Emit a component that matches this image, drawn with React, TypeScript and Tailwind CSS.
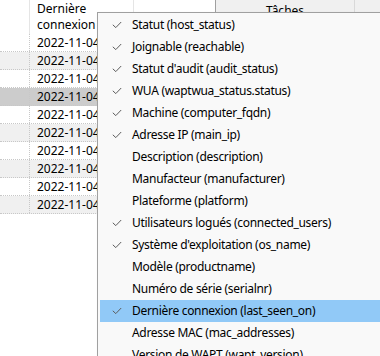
const rows = [
  "bg-white",
  "bg-[#f0f0f0]",
  "bg-white",
  "bg-[#cccccc]",
  "bg-white",
  "bg-[#f0f0f0]",
  "bg-white",
  "bg-[#f0f0f0]",
  "bg-white",
  "bg-[#f0f0f0]",
];

const items = [
  { label: "Statut (host_status)", checked: true },
  { label: "Joignable (reachable)", checked: true },
  { label: "Statut d'audit (audit_status)", checked: true },
  { label: "WUA (waptwua_status.status)", checked: true },
  { label: "Machine (computer_fqdn)", checked: true },
  { label: "Adresse IP (main_ip)", checked: true },
  { label: "Description (description)", checked: false },
  { label: "Manufacteur (manufacturer)", checked: false },
  { label: "Plateforme (platform)", checked: false },
  { label: "Utilisateurs logués (connected_users)", checked: true },
  { label: "Système d'exploitation (os_name)", checked: true },
  { label: "Modèle (productname)", checked: false },
  { label: "Numéro de série (serialnr)", checked: false },
  { label: "Dernière connexion (last_seen_on)", checked: true, active: true },
  { label: "Adresse MAC (mac_addresses)", checked: false },
  { label: "Version de WAPT (wapt_version)", checked: false },
];

function Check() {
  return (
    <svg width="10" height="8" viewBox="0 0 10 8" className="text-[#5c5c5c]">
      <path d="M0.8 3.8 L3.8 6.6 L9.2 1" fill="none" stroke="currentColor" strokeWidth="1" />
    </svg>
  );
}

export default function App() {
  return (
    <div
      className="relative h-[356px] w-[380px] overflow-hidden bg-white text-[12px] text-black"
      style={{ fontFamily: '"Noto Sans", "Segoe UI", sans-serif' }}
    >
      {/* grid header */}
      <div className="flex h-[34px]">
        <div className="w-[30px] border-r border-[#e5e5e5]" />
        <div className="flex w-[104px] flex-col border-r border-[#e5e5e5] pl-[7px] pt-[1px] leading-[16px]">
          <span>Dernière</span>
          <span>connexion</span>
        </div>
        <div className="w-[82px] border-r border-[#a0a0a0]" />
        <div className="flex h-[12px] flex-1 bg-[#f0f0f0]">
          <div className="flex w-[139px] justify-center border-r border-[#d9d9d9] pt-[3px] leading-[16px]">
            Tâches
          </div>
        </div>
      </div>

      {/* grid rows */}
      <div className="flex flex-col">
        {rows.map((bg, i) => (
          <div key={i} className={`flex h-[18px] border-b border-dotted border-[#c8c8c8] ${bg}`}>
            <div className="w-[30px] shrink-0 border-r border-dotted border-[#c8c8c8]" />
            <div className="w-[104px] shrink-0 whitespace-nowrap pl-[7px] leading-[17px]">2022-11-04</div>
          </div>
        ))}
      </div>

      {/* context menu */}
      <div className="absolute left-[97px] top-[12px] w-[300px] border border-[#a0a0a0] bg-[#f9f9f9] py-[1px] pl-[2px] tracking-[-0.3px] shadow-[2px_2px_3px_rgba(0,0,0,0.2)]">
        {items.map((it) => (
          <div
            key={it.label}
            className={`flex h-[22px] items-center ${it.active ? "bg-[#91c9f7]" : ""}`}
          >
            <div className="flex w-[32px] items-center justify-center pl-[2px]">
              {it.checked && <Check />}
            </div>
            <span className="whitespace-nowrap">{it.label}</span>
          </div>
        ))}
      </div>
    </div>
  );
}
